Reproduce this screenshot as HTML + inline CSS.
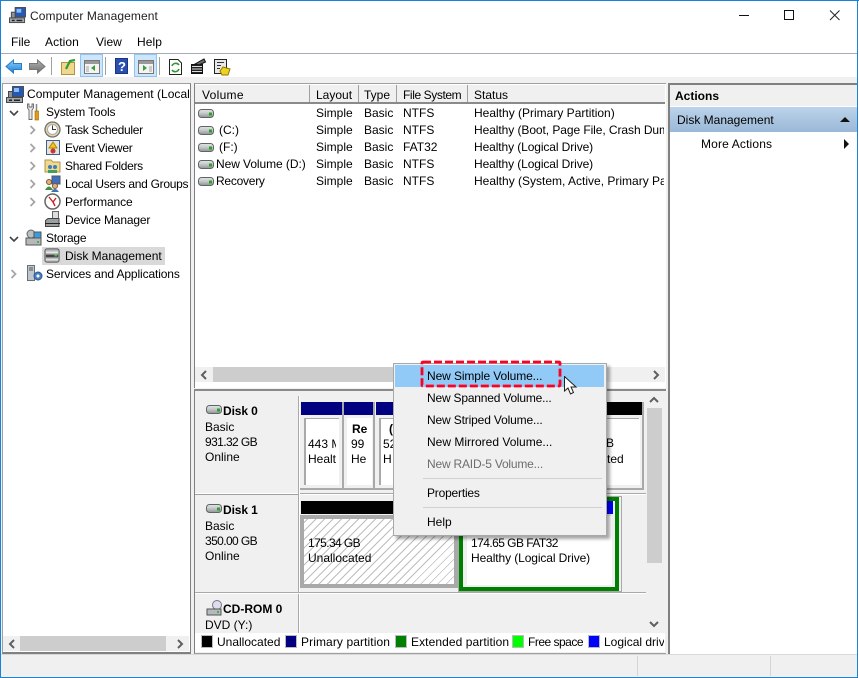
<!DOCTYPE html>
<html><head><meta charset="utf-8"><title>Computer Management</title>
<style>
html,body{margin:0;padding:0;background:#fff}
#w{position:relative;width:859px;height:678px;overflow:hidden;background:#fff;font:12px/16px "Liberation Sans",sans-serif;color:#000}
#w div,#w svg,#w span{position:absolute}
.t{white-space:nowrap}
.b{font-weight:bold}
.c{overflow:hidden;white-space:nowrap}
</style></head><body><div id="w">
<svg width="0" height="0" style="left:0;top:0"><defs>
<linearGradient id="dg" x1="0" y1="0" x2="0" y2="1"><stop offset="0" stop-color="#e4e6e6"/><stop offset=".45" stop-color="#c6caca"/><stop offset="1" stop-color="#8f9494"/></linearGradient>
<linearGradient id="ag" x1="0" y1="0" x2="0" y2="1"><stop offset="0" stop-color="#8cd0fb"/><stop offset="1" stop-color="#1f7fd6"/></linearGradient>
<linearGradient id="gg" x1="0" y1="0" x2="0" y2="1"><stop offset="0" stop-color="#b5b5b5"/><stop offset="1" stop-color="#6d6d6d"/></linearGradient>
<symbol id="drv" viewBox="0 0 16 9"><rect x=".5" y=".5" width="15" height="8" rx="3" fill="url(#dg)" stroke="#5f6566"/><rect x="11" y="3.500" width="3" height="3" fill="#27a327"/></symbol>
<symbol id="comp" viewBox="0 0 18 18"><rect x="6.500" y=".5" width="11" height="10" fill="#2458b4" stroke="#4a4f55"/><rect x="8" y="2" width="5" height="4" fill="#8dbcf0"/><rect x=".5" y="11.500" width="16" height="5" fill="#a2a7aa" stroke="#44484c"/><rect x="2.500" y="5.500" width="4" height="6" fill="#8d9296" stroke="#44484c"/><rect x="3" y="13.500" width="3" height="1.500" fill="#222"/><rect x="8" y="13.500" width="6" height="1.500" fill="#222"/></symbol>
<symbol id="chevr" viewBox="0 0 8 10"><path d="M1.500 1 L5.500 5 L1.500 9" fill="none" stroke="#a6a6a6" stroke-width="1.800"/></symbol>
<symbol id="chevd" viewBox="0 0 10 8"><path d="M1 2 L5 6 L9 2" fill="none" stroke="#444" stroke-width="1.600"/></symbol>
<symbol id="disk" viewBox="0 0 18 18"><rect x="1" y="2" width="15" height="14" rx="2" fill="#b8bcbe" stroke="#555"/><rect x="2" y="5" width="13" height="1" fill="#fff"/><rect x="2" y="8" width="13" height="3" fill="#444"/><rect x="11" y="8" width="3" height="2" fill="#46b946"/><rect x="2" y="13" width="13" height="1" fill="#eee"/></symbol>
</defs></svg>

<!-- window edges -->
<div style="left:0;top:0;width:859px;height:1px;background:#1883d7"></div>
<div style="left:0;top:0;width:1px;height:678px;background:#1883d7"></div>
<div style="left:857px;top:0;width:1px;height:678px;background:#1883d7"></div>
<div style="left:0;top:677px;width:858px;height:1px;background:#1883d7"></div>

<!-- title -->
<svg style="left:9px;top:7px" width="17" height="17"><use href="#comp" width="17" height="17"/></svg>
<div class="t" style="left:30px;top:8px;color:#222;letter-spacing:.1px">Computer Management</div>
<svg style="left:739px;top:9px" width="102" height="14"><path d="M0 6.500H10" stroke="#111"/><rect x="45.500" y="1.500" width="9" height="9" fill="none" stroke="#111"/><path d="M91 1.500 L100.500 11 M100.500 1.500 L91 11" stroke="#222" fill="none"/></svg>

<!-- menu -->
<div class="t" style="left:11px;top:34px">File</div>
<div class="t" style="left:45px;top:34px;letter-spacing:.1px">Action</div>
<div class="t" style="left:96px;top:34px">View</div>
<div class="t" style="left:137px;top:34px;letter-spacing:.1px">Help</div>
<div style="left:1px;top:53px;width:856px;height:1px;background:#a9aab8"></div>

<!-- toolbar -->
<svg style="left:5px;top:54px" width="236" height="24">
<path d="M1 12.500 L8.500 6 V9.500 H16.500 V15.500 H8.500 V19 Z" fill="url(#ag)" stroke="#2a7cc4"/>
<path d="M40 12.500 L32.500 6 V9.500 H24.500 V15.500 H32.500 V19 Z" fill="url(#gg)" stroke="#777"/>
<path d="M46.500 3V21" stroke="#a0a0a0"/>
<path d="M56.500 8.500 H69.500 V20.500 H56.500 Z" fill="#f1d68d" stroke="#b39240"/><path d="M61 15 L65 7 L70 6" stroke="#2e9e2e" stroke-width="2.200" fill="none"/>
<rect x="75.500" y=".5" width="22" height="22" fill="#cde6fb" stroke="#8fc4f1"/>
<rect x="79.500" y="6.500" width="15" height="13" fill="#f4f4f4" stroke="#777"/><rect x="80" y="7" width="14" height="3" fill="#999"/><path d="M90 11 L86 14 L90 17Z" fill="#35a035"/><rect x="81" y="12" width="3" height="6" fill="#ccc"/>
<path d="M100.500 3V21" stroke="#a0a0a0"/>
<rect x="110.500" y="4.500" width="12" height="15" fill="#2b4fb0" stroke="#1c3380"/><text x="113" y="17" font-size="13" font-weight="bold" fill="#fff" font-family="Liberation Sans">?</text>
<rect x="129.500" y=".5" width="22" height="22" fill="#cde6fb" stroke="#8fc4f1"/>
<rect x="133.500" y="6.500" width="15" height="13" fill="#f4f4f4" stroke="#777"/><rect x="134" y="7" width="14" height="3" fill="#999"/><path d="M138 11 L142 14 L138 17Z" fill="#35a035"/><rect x="144" y="12" width="3" height="6" fill="#ccc"/>
<path d="M154.500 3V21" stroke="#a0a0a0"/>
<path d="M164.500 5.500 H173 L176.500 9 V20.500 H164.500 Z" fill="#fff" stroke="#222"/><path d="M167 12 A4 4 0 0 1 174 11 M174 15 A4 4 0 0 1 167 16" stroke="#2a9a2a" stroke-width="1.600" fill="none"/>
<rect x="186.500" y="10.500" width="11" height="9" fill="#222" stroke="#111"/><path d="M187 12.500H197M187 15H197M187 17.500H197" stroke="#ddd"/><path d="M190 10 L199 5 L200.500 8 L194 11Z" fill="#6a6a6a" stroke="#111"/>
<rect x="209.500" y="5.500" width="12" height="14" fill="#e8e8e8" stroke="#222"/><path d="M212 8.500H219M212 11.500H216M212 14.500H215" stroke="#333"/><path d="M218 13 L225 15 L223 21 L217 21 L215 17Z" fill="#f0d020" stroke="#8b7a00"/>
</svg>

<!-- gray body -->
<div style="left:1px;top:77px;width:856px;height:600px;background:#f0f0f0"></div>

<!-- tree pane -->
<div style="left:2px;top:83px;width:189px;height:571px;background:#fff;border-top:1px solid #a0a0a0;border-left:1px solid #a0a0a0;border-right:1px solid #808080;border-bottom:2px solid #808080;box-sizing:border-box"></div>
<svg style="left:6px;top:86px" width="18" height="18"><use href="#comp" width="18" height="18"/></svg>
<div class="c" style="left:27px;top:86px;width:162px;letter-spacing:.03px">Computer Management (Local</div>
<svg style="left:9px;top:109px" width="10" height="8"><use href="#chevd"/></svg>
<svg style="left:26px;top:103px" width="14" height="18"><path d="M4.500 2 V16" stroke="#fff" stroke-width="3"/><path d="M1.500 1 V5 L3 7 V16.500 H6 V7 L7.500 5 V1 L6 1 V4 H3 V1 Z" fill="#e8e8e8" stroke="#666" stroke-width=".9"/><path d="M10.500 1 V8" stroke="#888" stroke-width="1.500"/><rect x="9" y="8" width="3.500" height="9" fill="#e29a12" stroke="#9a6708" stroke-width=".6"/></svg>
<div class="t" style="left:46px;top:104px;letter-spacing:-.15px">System Tools</div>
<svg style="left:29px;top:125px" width="8" height="10"><use href="#chevr"/></svg>
<svg style="left:44px;top:121px" width="17" height="17"><circle cx="8.500" cy="8.500" r="7.500" fill="#e5d6a8" stroke="#6f6f6f" stroke-width="1.300"/><circle cx="8.500" cy="8.500" r="5" fill="#fff" stroke="#aaa"/><path d="M8.500 4.500V8.500H12" stroke="#333" fill="none"/></svg>
<div class="t" style="left:65px;top:122px;letter-spacing:-.3px">Task Scheduler</div>
<svg style="left:29px;top:143px" width="8" height="10"><use href="#chevr"/></svg>
<svg style="left:45px;top:139px" width="16" height="17"><rect x="1.500" y="1.500" width="13" height="14" fill="#e6e2da" stroke="#3b5f95"/><path d="M8 3 L12 9 H4Z" fill="#f3c420" stroke="#a8860b"/><circle cx="8" cy="12" r="2.500" fill="#c33"/></svg>
<div class="t" style="left:65px;top:140px;letter-spacing:-.25px">Event Viewer</div>
<svg style="left:29px;top:161px" width="8" height="10"><use href="#chevr"/></svg>
<svg style="left:44px;top:157px" width="17" height="17"><path d="M1 3 H7 L9 5 H16 V15 H1Z" fill="#f2d78f" stroke="#b3953f"/><circle cx="6" cy="10" r="2" fill="#3a7dc2"/><circle cx="11" cy="10" r="2" fill="#3a7dc2"/><rect x="4" y="13" width="9" height="3" fill="#3fa05a"/></svg>
<div class="t" style="left:65px;top:158px;letter-spacing:-.3px">Shared Folders</div>
<svg style="left:29px;top:179px" width="8" height="10"><use href="#chevr"/></svg>
<svg style="left:44px;top:175px" width="17" height="17"><rect x="8" y="1" width="8" height="8" fill="#3e6fc4" stroke="#555"/><circle cx="5" cy="7" r="2.500" fill="#e0b080" stroke="#7b5a30"/><path d="M1 15 Q5 8 9 15Z" fill="#3f8f3f"/><circle cx="11" cy="11" r="2.500" fill="#e0b080" stroke="#7b5a30"/><path d="M7 17 Q11 11 15 17Z" fill="#3f6fb5"/></svg>
<div class="t" style="left:65px;top:176px;letter-spacing:-.28px">Local Users and Groups</div>
<svg style="left:29px;top:197px" width="8" height="10"><use href="#chevr"/></svg>
<svg style="left:44px;top:193px" width="17" height="17"><circle cx="8.500" cy="8.500" r="7.500" fill="#fff" stroke="#666" stroke-width="1.500"/><path d="M5 4 L9 9 L12 5 M9 9 L11 13" stroke="#c22" stroke-width="1.400" fill="none"/></svg>
<div class="t" style="left:65px;top:194px;letter-spacing:-.1px">Performance</div>
<svg style="left:44px;top:211px" width="17" height="17"><rect x="8.500" y=".5" width="6" height="9" fill="#ddd" stroke="#666"/><path d="M1.500 9.500 L4 7.500 H15 V15.500 H1.500Z" fill="#9a9fa2" stroke="#444"/><path d="M1 12.500H16" stroke="#222"/></svg>
<div class="t" style="left:65px;top:212px;letter-spacing:-.15px">Device Manager</div>
<svg style="left:9px;top:235px" width="10" height="8"><use href="#chevd"/></svg>
<svg style="left:25px;top:229px" width="17" height="17"><circle cx="6" cy="5" r="4" fill="#b9c0c2" stroke="#666"/><rect x="9" y="3" width="7" height="6" fill="#3a9ce0" stroke="#555"/><rect x="1" y="9" width="15" height="7" fill="#b5b9bb" stroke="#555"/><rect x="12" y="12" width="2" height="2" fill="#3db83d"/></svg>
<div class="t" style="left:46px;top:230px;letter-spacing:-.25px">Storage</div>
<div style="left:42px;top:247px;width:123px;height:18px;background:#d9d9d9"></div>
<svg style="left:44px;top:247px" width="17" height="17"><use href="#disk" width="17" height="17"/></svg>
<div class="t" style="left:65px;top:248px">Disk Management</div>
<svg style="left:10px;top:269px" width="8" height="10"><use href="#chevr"/></svg>
<svg style="left:27px;top:265px" width="16" height="17"><rect x=".5" y=".5" width="7" height="15" fill="#bfc6cd" stroke="#66707a"/><path d="M2 3H6M2 5H6" stroke="#555"/><circle cx="11" cy="11" r="4" fill="#4a7fbe" stroke="#2c5a92"/><circle cx="11" cy="11" r="1.500" fill="#fff"/></svg>
<div class="t" style="left:46px;top:266px;letter-spacing:-.12px">Services and Applications</div>
<!-- tree scrollbar -->
<div style="left:3px;top:636px;width:186px;height:15px;background:#f0f0f0"></div>
<div style="left:20px;top:636px;width:146px;height:15px;background:#cdcdcd"></div>
<svg style="left:8px;top:639px" width="176" height="10"><path d="M6 1 L2 5 L6 9 M170 1 L174 5 L170 9" stroke="#606060" stroke-width="2" fill="none"/></svg>

<!-- list pane -->
<div style="left:194px;top:83px;width:472px;height:305px;background:#fff;border-top:1px solid #a0a0a0;border-left:1px solid #808080;box-sizing:border-box"></div>
<div style="left:195px;top:84px;width:470px;height:20px;background:#f0f0f0;border-top:1px solid #fff;border-bottom:2px solid #8a8a8a;box-sizing:border-box"></div>
<div style="left:309px;top:85px;width:1px;height:17px;background:#a0a0a0"></div>
<div style="left:358px;top:85px;width:1px;height:17px;background:#a0a0a0"></div>
<div style="left:396px;top:85px;width:1px;height:17px;background:#a0a0a0"></div>
<div style="left:467px;top:85px;width:1px;height:17px;background:#a0a0a0"></div>
<div class="t" style="left:202px;top:87px;letter-spacing:.3px">Volume</div>
<div class="t" style="left:316px;top:87px">Layout</div>
<div class="t" style="left:364px;top:87px">Type</div>
<div class="t" style="left:403px;top:87px;letter-spacing:-.4px">File System</div>
<div class="t" style="left:474px;top:87px">Status</div>

<svg style="left:198px;top:109px" width="16" height="9"><use href="#drv"/></svg>
<svg style="left:198px;top:126px" width="16" height="9"><use href="#drv"/></svg>
<svg style="left:198px;top:143px" width="16" height="9"><use href="#drv"/></svg>
<svg style="left:198px;top:160px" width="16" height="9"><use href="#drv"/></svg>
<svg style="left:198px;top:177px" width="16" height="9"><use href="#drv"/></svg>
<div class="t" style="left:219px;top:122px">(C:)</div>
<div class="t" style="left:219px;top:139px">(F:)</div>
<div class="t" style="left:216px;top:156px;letter-spacing:-.07px">New Volume (D:)</div>
<div class="t" style="left:216px;top:173px;letter-spacing:-.25px">Recovery</div>

<div class="t" style="left:316px;top:105px">Simple</div><div class="t" style="left:364px;top:105px">Basic</div><div class="t" style="left:403px;top:105px">NTFS</div><div class="c" style="left:474px;top:105px;width:190px">Healthy (Primary Partition)</div>
<div class="t" style="left:316px;top:122px">Simple</div><div class="t" style="left:364px;top:122px">Basic</div><div class="t" style="left:403px;top:122px">NTFS</div><div class="c" style="left:474px;top:122px;width:190px;letter-spacing:-.07px">Healthy (Boot, Page File, Crash Dum</div>
<div class="t" style="left:316px;top:139px">Simple</div><div class="t" style="left:364px;top:139px">Basic</div><div class="t" style="left:403px;top:139px">FAT32</div><div class="c" style="left:474px;top:139px;width:190px;letter-spacing:-.1px">Healthy (Logical Drive)</div>
<div class="t" style="left:316px;top:156px">Simple</div><div class="t" style="left:364px;top:156px">Basic</div><div class="t" style="left:403px;top:156px">NTFS</div><div class="c" style="left:474px;top:156px;width:190px;letter-spacing:-.1px">Healthy (Logical Drive)</div>
<div class="t" style="left:316px;top:173px">Simple</div><div class="t" style="left:364px;top:173px">Basic</div><div class="t" style="left:403px;top:173px">NTFS</div><div class="c" style="left:474px;top:173px;width:190px">Healthy (System, Active, Primary Pa</div>

<!-- list hscrollbar -->
<div style="left:195px;top:367px;width:470px;height:15px;background:#f0f0f0"></div>
<div style="left:213px;top:367px;width:190px;height:15px;background:#cdcdcd"></div>
<svg style="left:200px;top:370px" width="460" height="10"><path d="M6 1 L2 5 L6 9 M454 1 L458 5 L454 9" stroke="#606060" stroke-width="2" fill="none"/></svg>

<!-- disk pane -->
<div style="left:194px;top:389px;width:472px;height:265px;background:#f0f0f0;border-top:2px solid #8a8a8a;border-left:1px solid #808080;border-bottom:1px solid #a0a0a0;box-sizing:border-box"></div>
<!-- rows -->
<div style="left:195px;top:493px;width:451px;height:2px;background:#fff"></div>
<div style="left:195px;top:494px;width:104px;height:1px;background:#a0a0a0"></div>
<div style="left:298px;top:396px;width:1px;height:238px;background:#a9a9a9"></div>
<div style="left:299px;top:396px;width:1px;height:238px;background:#fff"></div>
<div style="left:300px;top:493px;width:346px;height:1px;background:#a9a9a9"></div>
<div style="left:195px;top:592px;width:451px;height:1px;background:#a9a9a9"></div>
<div style="left:195px;top:593px;width:451px;height:1px;background:#fff"></div>

<svg style="left:206px;top:405px" width="16" height="9"><use href="#drv"/></svg>
<div class="t b" style="left:223px;top:403px;letter-spacing:-.1px">Disk 0</div>
<div class="t" style="left:205px;top:419px">Basic</div>
<div class="t" style="left:205px;top:434px;letter-spacing:-.6px">931.32 GB</div>
<div class="t" style="left:205px;top:449px">Online</div>

<svg style="left:206px;top:504px" width="16" height="9"><use href="#drv"/></svg>
<div class="t b" style="left:223px;top:502px;letter-spacing:-.1px">Disk 1</div>
<div class="t" style="left:205px;top:518px">Basic</div>
<div class="t" style="left:205px;top:533px;letter-spacing:-.6px">350.00 GB</div>
<div class="t" style="left:205px;top:548px">Online</div>

<svg style="left:206px;top:599px" width="17" height="17"><circle cx="11" cy="6" r="4.500" fill="#dde" stroke="#778"/><rect x="1" y="10" width="14" height="6" fill="#b5b9bb" stroke="#555"/><rect x="11" y="12" width="2" height="2" fill="#3db83d"/></svg>
<div class="t b" style="left:223px;top:601px">CD-ROM 0</div>
<div class="t" style="left:205px;top:617px">DVD (Y:)</div>

<!-- disk 0 partitions -->
<div style="left:301px;top:402px;width:41px;height:13px;background:#000080"></div>
<div style="left:344px;top:402px;width:29px;height:13px;background:#000080"></div>
<div style="left:376px;top:402px;width:30px;height:13px;background:#000080"></div>
<div style="left:560px;top:402px;width:82px;height:13px;background:#000"></div>
<div style="left:342px;top:402px;width:2px;height:87px;background:#a9a9a9"></div>
<div style="left:373px;top:402px;width:2px;height:87px;background:#a9a9a9"></div>
<div style="left:642px;top:402px;width:2px;height:88px;background:#a9a9a9"></div>
<div style="left:300px;top:488px;width:344px;height:2px;background:#a9a9a9"></div>
<div style="left:304px;top:418px;width:35px;height:67px;background:#fff;border-left:2px solid #a9a9a9;border-top:1px solid #a9a9a9;box-sizing:border-box"></div>
<div style="left:347px;top:418px;width:25px;height:67px;background:#fff"></div>
<div style="left:379px;top:418px;width:26px;height:67px;background:#fff;border-left:2px solid #a9a9a9;border-top:1px solid #a9a9a9;box-sizing:border-box"></div>
<div style="left:590px;top:418px;width:50px;height:67px;background:#fff"></div>
<div style="left:590px;top:418px;width:49px;height:1px;background:#a9a9a9"></div>
<div class="c" style="left:308px;top:436px;width:28px">443 M</div>
<div class="c" style="left:308px;top:451px;width:28px">Healt</div>
<div class="c b" style="left:352px;top:421px;width:18px">Re</div>
<div class="c" style="left:351px;top:436px;width:17px">99 M</div>
<div class="c" style="left:351px;top:451px;width:17px">He</div>
<div class="c b" style="left:389px;top:421px;width:14px">(</div>
<div class="c" style="left:383px;top:436px;width:14px">52</div>
<div class="c" style="left:383px;top:451px;width:14px">H</div>
<div class="t" style="left:606px;top:435px">B</div>
<div class="t" style="left:607px;top:451px">ted</div>

<!-- disk 1 partitions -->
<div style="left:301px;top:501px;width:157px;height:13px;background:#000"></div>
<div style="left:300px;top:515px;width:158px;height:73px;box-sizing:border-box;border:4px solid #a9a9a9;background:repeating-linear-gradient(-45deg,#fff 0,#fff 5px,#bdbdbd 5px,#bdbdbd 6px)"></div>
<div class="t" style="left:308px;top:535px;letter-spacing:-.6px">175.34 GB</div>
<div class="t" style="left:308px;top:550px">Unallocated</div>
<div style="left:458px;top:496px;width:164px;height:96px;box-sizing:border-box;border:1px solid #a9a9a9"></div>
<div style="left:459px;top:497px;width:160px;height:94px;box-sizing:border-box;border:4px solid #008000;background:#f0f0f0"></div>
<div style="left:463px;top:501px;width:150px;height:13px;background:#0000ff"></div>
<div style="left:467px;top:516px;width:145px;height:69px;background:#fff"></div>
<div class="t" style="left:471px;top:535px;letter-spacing:-.55px">174.65 GB FAT32</div>
<div class="t" style="left:471px;top:550px;letter-spacing:-.1px">Healthy (Logical Drive)</div>

<!-- v scrollbar -->
<div style="left:646px;top:392px;width:16px;height:241px;background:#f0f0f0"></div>
<div style="left:647px;top:408px;width:15px;height:155px;background:#cdcdcd"></div>
<svg style="left:649px;top:396px" width="10" height="232"><path d="M1 6 L5 2 L9 6 M1 226 L5 230 L9 226" stroke="#606060" stroke-width="2" fill="none"/></svg>

<!-- legend -->
<div style="left:195px;top:633px;width:470px;height:19px;background:#fff"></div>
<div style="left:202px;top:636px;width:10px;height:11px;background:#000;outline:1px solid #bbb"></div>
<div class="t" style="left:217px;top:634px">Unallocated</div>
<div style="left:286px;top:636px;width:10px;height:11px;background:#000080;outline:1px solid #bbb"></div>
<div class="t" style="left:301px;top:634px;letter-spacing:.1px">Primary partition</div>
<div style="left:396px;top:636px;width:10px;height:11px;background:#008000;outline:1px solid #bbb"></div>
<div class="t" style="left:411px;top:634px;letter-spacing:.08px">Extended partition</div>
<div style="left:513px;top:636px;width:10px;height:11px;background:#00ff00;outline:1px solid #bbb"></div>
<div class="t" style="left:528px;top:634px;letter-spacing:-.5px">Free space</div>
<div style="left:589px;top:636px;width:10px;height:11px;background:#0000ff;outline:1px solid #bbb"></div>
<div class="c" style="left:604px;top:634px;width:60px">Logical drive</div>

<!-- actions -->
<div style="left:668px;top:83px;width:189px;height:571px;background:#fff;border-top:2px solid #808080;border-left:2px solid #808080;box-sizing:border-box"></div>
<div style="left:670px;top:85px;width:187px;height:21px;background:#f0f0f0"></div>
<div class="t b" style="left:675px;top:88px">Actions</div>
<div style="left:670px;top:107px;width:187px;height:25px;background:linear-gradient(#bcd3ea,#9ab8d8)"></div>
<div class="t" style="left:677px;top:112px">Disk Management</div>
<svg style="left:839px;top:116px" width="12" height="7"><path d="M1 6 L6 1 L11 6Z" fill="#111"/></svg>
<div class="t" style="left:701px;top:136px;letter-spacing:.15px">More Actions</div>
<svg style="left:843px;top:138px" width="7" height="12"><path d="M1 1 L6 6 L1 11Z" fill="#111"/></svg>

<!-- status bar -->
<div style="left:1px;top:654px;width:856px;height:1px;background:#d8d8d8"></div>
<div style="left:637px;top:656px;width:1px;height:20px;background:#d5d5d5"></div>
<div style="left:770px;top:656px;width:1px;height:20px;background:#d5d5d5"></div>

<!-- context menu -->
<div style="left:393px;top:363px;width:214px;height:173px;background:#f0f0f0;border:1px solid #a8a8a8;box-sizing:border-box;box-shadow:3px 3px 3px rgba(0,0,0,.35)"></div>
<div style="left:395px;top:365px;width:209px;height:22px;background:#91c9f7"></div>
<div class="t" style="left:427px;top:368px;letter-spacing:-.1px">New Simple Volume...</div>
<div class="t" style="left:427px;top:390px;letter-spacing:-.2px">New Spanned Volume...</div>
<div class="t" style="left:427px;top:412px;letter-spacing:-.15px">New Striped Volume...</div>
<div class="t" style="left:427px;top:434px">New Mirrored Volume...</div>
<div class="t" style="left:427px;top:456px;color:#6d6d6d;letter-spacing:-.2px">New RAID-5 Volume...</div>
<div style="left:423px;top:478px;width:179px;height:1px;background:#d0d0d0"></div>
<div class="t" style="left:427px;top:485px;letter-spacing:-.2px">Properties</div>
<div style="left:423px;top:507px;width:179px;height:1px;background:#d0d0d0"></div>
<div class="t" style="left:427px;top:514px">Help</div>
<svg style="left:420px;top:360px" width="142" height="28"><rect x="2" y="2" width="138" height="24" rx="1" fill="none" stroke="#ff0020" stroke-width="2.800" stroke-dasharray="8 3"/></svg>
<svg style="left:563px;top:376px" width="15" height="20"><path d="M1.500 .5 V15 L5 12 L7.500 18 L10.500 16.500 L8 11 L13 11 Z" fill="#fff" stroke="#222"/></svg>
</div></body></html>
